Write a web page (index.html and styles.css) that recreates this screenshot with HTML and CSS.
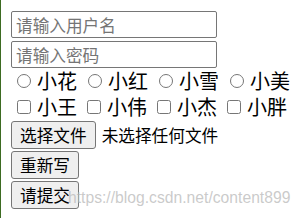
FILE: index.html
```html
<!DOCTYPE html>
<html lang="zh-CN">
<head>
<meta charset="utf-8">
<title>表单</title>
<link rel="stylesheet" href="styles.css">
</head>
<body>
<form class="form">
  <input class="text-input" type="text" placeholder="请输入用户名">
  <input class="text-input second" type="password" placeholder="请输入密码">
  <div class="choice-row radios">
    <label class="choice"><input type="radio" name="girl">小花</label>
    <label class="choice"><input type="radio" name="girl">小红</label>
    <label class="choice"><input type="radio" name="girl">小雪</label>
    <label class="choice"><input type="radio" name="girl">小美</label>
  </div>
  <div class="choice-row checks">
    <label class="choice"><input type="checkbox">小王</label>
    <label class="choice"><input type="checkbox">小伟</label>
    <label class="choice"><input type="checkbox">小杰</label>
    <label class="choice"><input type="checkbox">小胖</label>
  </div>
  <div class="file-row">
    <button class="btn" type="button">选择文件</button>
    <span class="file-name">未选择任何文件</span>
  </div>
  <button class="btn stacked" type="reset">重新写</button>
  <button class="btn stacked" type="submit">请提交</button>
</form>
<div class="watermark">https://blog.csdn.net/content899</div>
</body>
</html>
```
FILE: styles.css
```css
html, body {
  margin: 0;
}

body {
  position: relative;
  box-sizing: border-box;
  min-height: 100vh;
  border-left: 1px solid #3d6b22;
  padding: 11px 0 0 10px;
  font-family: "Noto Sans CJK SC", "Noto Sans", sans-serif;
  font-size: 20px;
  color: #000;
  background: #fff;
}

.form {
  display: flex;
  flex-direction: column;
  align-items: flex-start;
}

.text-input {
  display: block;
  box-sizing: border-box;
  width: 206px;
  height: 27px;
  margin: 0;
  padding: 0 4px;
  border: 1px solid #767676;
  border-radius: 2px;
  font-family: "Noto Sans CJK SC", sans-serif;
  font-size: 16.67px;
  line-height: 1;
  background: #fff;
}

.text-input::placeholder {
  color: #757575;
}

.second {
  margin-top: 3px;
}

.choice-row {
  display: flex;
  align-items: center;
  height: 26px;
}

.choice {
  display: flex;
  align-items: center;
  margin-right: 5px;
  line-height: 1.1;
}

.checks .choice {
  margin-right: 4px;
}

.choice input {
  width: 14px;
  height: 14px;
  margin: 0 6px;
}

.file-row {
  display: flex;
  align-items: center;
  margin-top: 1px;
}

.btn {
  box-sizing: border-box;
  height: 28px;
  margin: 0;
  padding: 0 8px;
  border: 1px solid #767676;
  border-radius: 3px;
  background: #efefef;
  color: #000;
  font-family: "Noto Sans CJK SC", sans-serif;
  font-size: 16.67px;
  line-height: 1;
}

.file-name {
  margin-left: 6px;
  font-size: 16.67px;
  line-height: 1;
}

.stacked {
  margin-top: 2px;
}

.watermark {
  position: absolute;
  left: 67px;
  top: 189px;
  font-family: "Liberation Sans", Arial, sans-serif;
  font-size: 15.7px;
  color: rgba(185, 185, 185, 0.75);
  white-space: nowrap;
  pointer-events: none;
}
```
